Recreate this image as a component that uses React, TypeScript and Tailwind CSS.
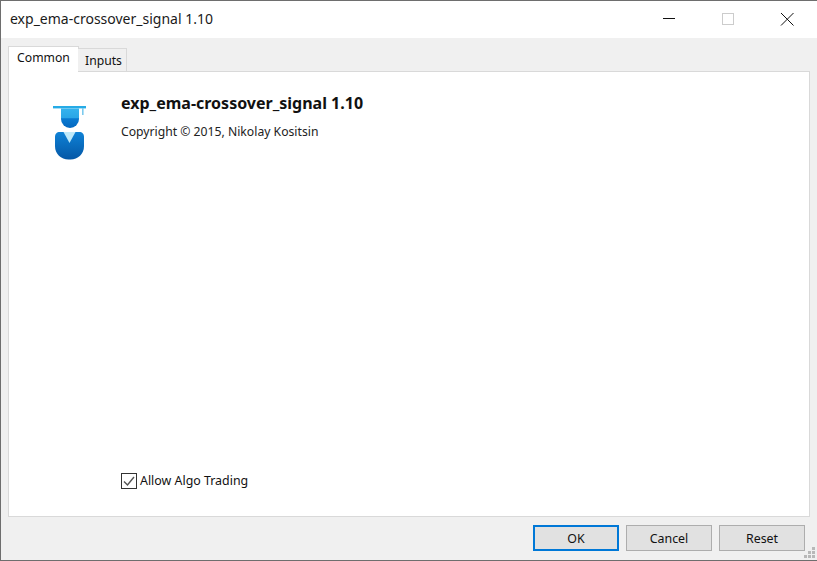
const font = { fontFamily: '"Noto Sans", Tahoma, sans-serif' };

function GraduateIcon() {
  return (
    <svg width="36" height="58" viewBox="0 0 36 58" className="block">
      <defs>
        <linearGradient id="cap" x1="0" y1="0" x2="0" y2="1">
          <stop offset="0" stopColor="#35b3ee" />
          <stop offset="0.5" stopColor="#2aa5e6" />
          <stop offset="0.52" stopColor="#0a7ad1" />
          <stop offset="1" stopColor="#0468bf" />
        </linearGradient>
        <linearGradient id="body" x1="0" y1="0" x2="0" y2="1">
          <stop offset="0" stopColor="#0f82d6" />
          <stop offset="1" stopColor="#0457a6" />
        </linearGradient>
      </defs>
      <rect x="0" y="0" width="33" height="2.4" fill="#26abe6" />
      <rect x="29" y="2" width="1.6" height="7" fill="#7ccbee" />
      <path d="M8 2.4H26V13A9 9 0 0 1 8 13Z" fill="url(#cap)" />
      <path d="M7 26H26C29.5 26 31 28 31 31V40C31 48 25 53.5 17.5 53.5H15.5C8 53.5 2 48 2 40V31C2 28 3.5 26 7 26Z" fill="url(#body)" />
      <path d="M10.5 26H22.5L16.5 37Z" fill="#bfe9f9" />
    </svg>
  );
}

function Btn({ label, primary }: { label: string; primary?: boolean }) {
  return (
    <div
      className={
        primary
          ? "w-[86px] h-[26px] bg-[#e1e1e1] border-2 border-[#0078d7] flex items-center justify-center text-[12.4px] text-[#111] pt-[2px]"
          : "w-[86px] h-[26px] bg-[#e1e1e1] border border-[#adadad] flex items-center justify-center text-[12.4px] text-[#111] pt-[2px]"
      }
    >
      {label}
    </div>
  );
}

export default function App() {
  return (
    <div
      style={font}
      className="relative w-[817px] h-[561px] flex flex-col bg-[#f0f0f0] border-t border-b border-l border-[#6e6e6e] overflow-hidden text-[#111]"
    >
      <div className="h-[37px] shrink-0 bg-white flex items-center justify-between">
        <span className="pl-[9px] text-[14px] text-[#1a1a1a] leading-none pb-[1px]">exp_ema-crossover_signal 1.10</span>
        <div className="flex items-center pr-[7px]">
          <svg width="170" height="37" viewBox="0 0 170 37">
            <rect x="23" y="17" width="12" height="1" fill="#111" />
            <rect x="82.5" y="12.5" width="11" height="11" fill="none" stroke="#cccccc" />
            <path d="M141 12L153.5 24.5M153.5 12L141 24.5" stroke="#111" strokeWidth="1" fill="none" />
          </svg>
        </div>
      </div>

      <div className="flex-1 flex flex-col pl-[7px] pr-[7px] pt-[8px] min-h-0">
        <div className="flex items-end h-[26px] shrink-0 relative z-10">
          <div className="w-[71px] h-[26px] bg-white border-t border-l border-r border-[#d9d9d9] flex items-center justify-center text-[12.2px] pb-[2px]">
            Common
          </div>
          <div className="w-[49px] h-[24px] -ml-px bg-[#f0f0f0] border-t border-r border-b border-[#d9d9d9] flex items-center justify-center text-[12.2px] pl-[3px] pt-[3px]">
            Inputs
          </div>
        </div>
        <div className="h-[446px] -mt-px shrink-0 bg-white border border-[#d9d9d9] flex flex-col justify-between pl-[112px] pb-[27px] relative">
          <div className="flex pt-[21px]">
            <div className="-ml-[68px] mt-[13px] w-[68px] shrink-0">
              <GraduateIcon />
            </div>
            <div>
              <div className="text-[16px] font-bold leading-[20px] text-[#111]">exp_ema-crossover_signal 1.10</div>
              <div className="text-[12.2px] leading-[16px] mt-[11px] text-[#222]">Copyright © 2015, Nikolay Kositsin</div>
            </div>
          </div>
          <div className="flex items-center gap-[3px]">
            <div className="w-[16px] h-[16px] border border-[#333] flex items-center justify-center">
              <svg width="14" height="14" viewBox="0 0 14 14">
                <path d="M2 7.5L5.5 11L12 3" stroke="#555" strokeWidth="1.4" fill="none" />
              </svg>
            </div>
            <span className="text-[12.4px] leading-[16px] text-[#111]">Allow Algo Trading</span>
          </div>
        </div>
        <div className="flex-1 flex justify-end gap-[7px] pt-[8px] pr-[5px]">
          <Btn label="OK" primary />
          <Btn label="Cancel" />
          <Btn label="Reset" />
        </div>
      </div>

      <svg width="12" height="12" viewBox="0 0 12 12" className="absolute right-[1px] bottom-[1px]">
        <g fill="#b8b8b8">
          <rect x="8" y="0" width="3" height="3" />
          <rect x="4" y="4" width="3" height="3" />
          <rect x="8" y="4" width="3" height="3" />
          <rect x="0" y="8" width="3" height="3" />
          <rect x="4" y="8" width="3" height="3" />
          <rect x="8" y="8" width="3" height="3" />
        </g>
      </svg>
    </div>
  );
}
